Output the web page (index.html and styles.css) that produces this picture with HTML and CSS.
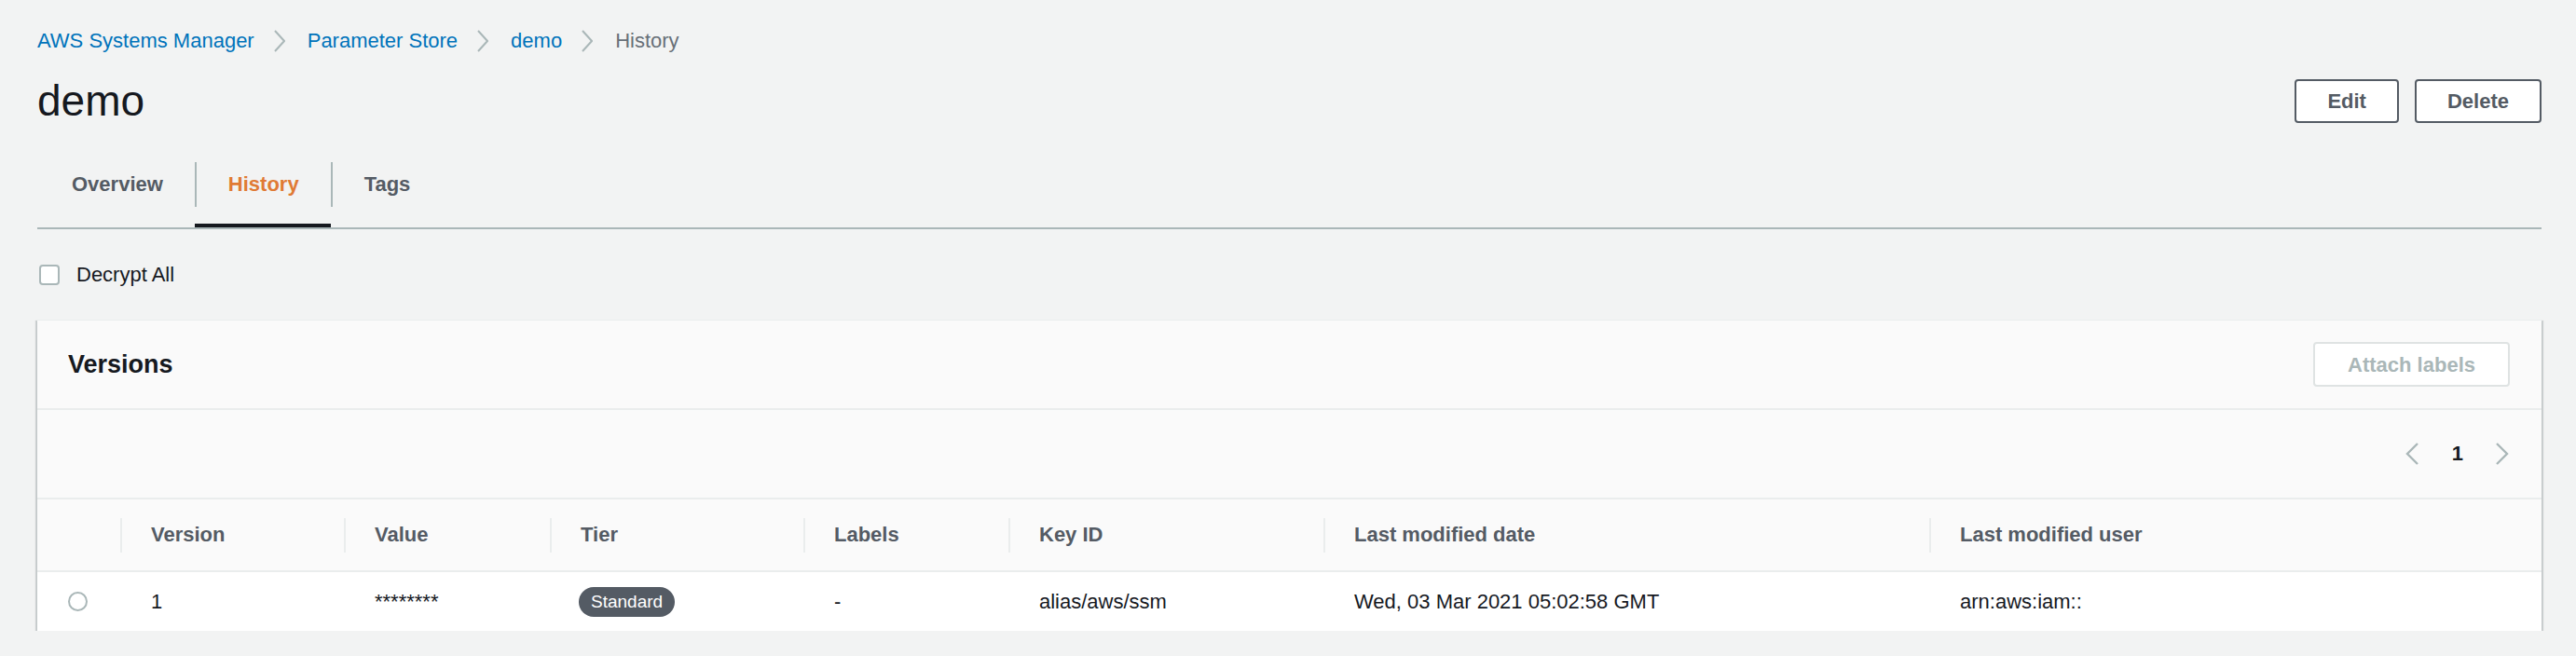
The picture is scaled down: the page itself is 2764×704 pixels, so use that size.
FILE: index.html
```html
<!DOCTYPE html>
<html lang="en">
<head>
<meta charset="utf-8">
<title>demo - History</title>
<link rel="stylesheet" href="styles.css">
</head>
<body>
<div class="page">
  <nav class="breadcrumbs">
    <a class="crumb" href="#">AWS Systems Manager</a>
    <svg class="crumb-sep" width="12" height="24" viewBox="0 0 12 24"><polyline points="1,1 11,12 1,23" fill="none" stroke="#aab7b8" stroke-width="2"/></svg>
    <a class="crumb" href="#">Parameter Store</a>
    <svg class="crumb-sep" width="12" height="24" viewBox="0 0 12 24"><polyline points="1,1 11,12 1,23" fill="none" stroke="#aab7b8" stroke-width="2"/></svg>
    <a class="crumb" href="#">demo</a>
    <svg class="crumb-sep" width="12" height="24" viewBox="0 0 12 24"><polyline points="1,1 11,12 1,23" fill="none" stroke="#aab7b8" stroke-width="2"/></svg>
    <span class="crumb current">History</span>
  </nav>

  <div class="title-row">
    <h1 class="title">demo</h1>
    <div class="actions">
      <button class="btn">Edit</button>
      <button class="btn">Delete</button>
    </div>
  </div>

  <div class="tabs">
    <div class="tab first"><span class="tab-inner">Overview</span></div>
    <div class="tab active"><span class="tab-inner divided">History</span></div>
    <div class="tab"><span class="tab-inner divided">Tags</span></div>
  </div>

  <label class="decrypt">
    <span class="checkbox"></span>
    <span class="decrypt-label">Decrypt All</span>
  </label>

  <section class="panel">
    <header class="panel-header">
      <h2 class="panel-title">Versions</h2>
      <button class="btn btn-disabled">Attach labels</button>
    </header>
    <div class="pager">
      <svg class="pager-arrow" width="14" height="24" viewBox="0 0 14 24"><polyline points="13,1 2,12 13,23" fill="none" stroke="#aab7b8" stroke-width="2.4"/></svg>
      <span class="pager-num">1</span>
      <svg class="pager-arrow" width="14" height="24" viewBox="0 0 14 24"><polyline points="1,1 12,12 1,23" fill="none" stroke="#aab7b8" stroke-width="2.4"/></svg>
    </div>
    <div class="table">
      <div class="row head">
        <div class="th"></div>
        <div class="th"><span class="th-inner">Version</span></div>
        <div class="th"><span class="th-inner">Value</span></div>
        <div class="th"><span class="th-inner">Tier</span></div>
        <div class="th"><span class="th-inner">Labels</span></div>
        <div class="th"><span class="th-inner">Key ID</span></div>
        <div class="th"><span class="th-inner">Last modified date</span></div>
        <div class="th"><span class="th-inner">Last modified user</span></div>
      </div>
      <div class="row body">
        <div class="td"><span class="radio"></span></div>
        <div class="td">1</div>
        <div class="td">********</div>
        <div class="td"><span class="badge">Standard</span></div>
        <div class="td">-</div>
        <div class="td">alias/aws/ssm</div>
        <div class="td">Wed, 03 Mar 2021 05:02:58 GMT</div>
        <div class="td">arn:aws:iam::</div>
      </div>
    </div>
  </section>
</div>
</body>
</html>
```

FILE: styles.css
```css
html, body {
  margin: 0;
  padding: 0;
  background: #f2f3f3;
}
body {
  font-family: "Liberation Sans", Arial, sans-serif;
  font-size: 22px;
  color: #16191f;
}
.page {
  padding: 32px 37px 0 40px;
}

/* breadcrumbs */
.breadcrumbs {
  display: flex;
  align-items: center;
  height: 24px;
  line-height: 24px;
}
.crumb {
  color: #0073bb;
  text-decoration: none;
  white-space: nowrap;
}
.crumb.current {
  color: #687078;
}
.crumb-sep {
  display: block;
  margin: 0 24px 0 21px;
}

/* title row */
.title-row {
  margin-top: 24px;
  height: 56px;
  display: flex;
  align-items: center;
  justify-content: space-between;
}
.title {
  margin: 0;
  font-size: 46px;
  font-weight: 400;
  line-height: 56px;
  color: #16191f;
}
.actions {
  display: flex;
  gap: 17px;
}
.btn {
  font-family: "Liberation Sans", Arial, sans-serif;
  font-size: 22px;
  font-weight: 700;
  height: 47px;
  padding: 0 33px;
  background: #ffffff;
  color: #545b64;
  border: 2px solid #545b64;
  border-radius: 4px;
  line-height: 43px;
  cursor: pointer;
}
.btn-disabled {
  height: 48px;
  padding: 0 35px;
  color: #aab7b8;
  border-color: #dfe3e3;
  cursor: default;
}

/* tabs */
.tabs {
  margin-top: 38px;
  display: flex;
  border-bottom: 2px solid #aab7b8;
}
.tab {
  padding-bottom: 18px;
  border-bottom: 4px solid transparent;
  color: #545b64;
  font-weight: 700;
}
.tab-inner {
  display: flex;
  align-items: center;
  height: 48px;
  padding: 0 34px;
}
.tab.first .tab-inner {
  padding-left: 37px;
}
.tab-inner.divided {
  border-left: 2px solid #aab7b8;
}
.tab.active {
  color: #e07a34;
  border-bottom-color: #16191f;
}

/* decrypt checkbox */
.decrypt {
  margin-top: 38px;
  display: flex;
  align-items: center;
  height: 22px;
  gap: 18px;
}
.checkbox {
  display: block;
  width: 18px;
  height: 18px;
  margin-left: 2px;
  border: 2px solid #aab7b8;
  border-radius: 4px;
  background: #ffffff;
}
.decrypt-label {
  line-height: 22px;
}

/* panel */
.panel {
  margin-top: 37px;
  background: #fafafa;
  border-top: 1px solid #eaeded;
  box-shadow: 0 2px 1px 0 rgba(0, 28, 36, 0.3), 2px 1px 1px 0 rgba(0, 28, 36, 0.15), -2px 1px 1px 0 rgba(0, 28, 36, 0.15);
}
.panel-header {
  display: flex;
  align-items: center;
  justify-content: space-between;
  padding: 23px 34px 23px 33px;
  border-bottom: 2px solid #eaeded;
}
.panel-title {
  margin: 0;
  font-size: 27px;
  font-weight: 700;
  line-height: 32px;
}
.pager {
  height: 94px;
  display: flex;
  align-items: center;
  justify-content: flex-end;
  padding-right: 35px;
}
.pager-arrow {
  display: block;
}
.pager-num {
  font-weight: 700;
  margin: 0 35px 0 36px;
}

/* table */
.row {
  display: grid;
  grid-template-columns: 89px 240px 221px 272px 220px 338px 650px 1fr;
}
.row.head {
  height: 76px;
  border-top: 2px solid #eaeded;
  border-bottom: 2px solid #eaeded;
  align-items: center;
}
.th {
  color: #545b64;
  font-weight: 700;
}
.th-inner {
  display: flex;
  align-items: center;
  height: 37px;
  padding-left: 31px;
  border-left: 2px solid #eaeded;
}
.row.body {
  height: 63px;
  background: #ffffff;
  align-items: center;
}
.td {
  padding-left: 33px;
  white-space: nowrap;
}
.td:nth-child(4) {
  padding-left: 31px;
}
.radio {
  display: block;
  width: 17px;
  height: 17px;
  border: 2px solid #aab7b8;
  border-radius: 50%;
  background: #ffffff;
}
.badge {
  display: inline-block;
  height: 32px;
  line-height: 32px;
  padding: 0 13px;
  border-radius: 16px;
  background: #545b64;
  color: #ffffff;
  font-size: 19px;
}
```
